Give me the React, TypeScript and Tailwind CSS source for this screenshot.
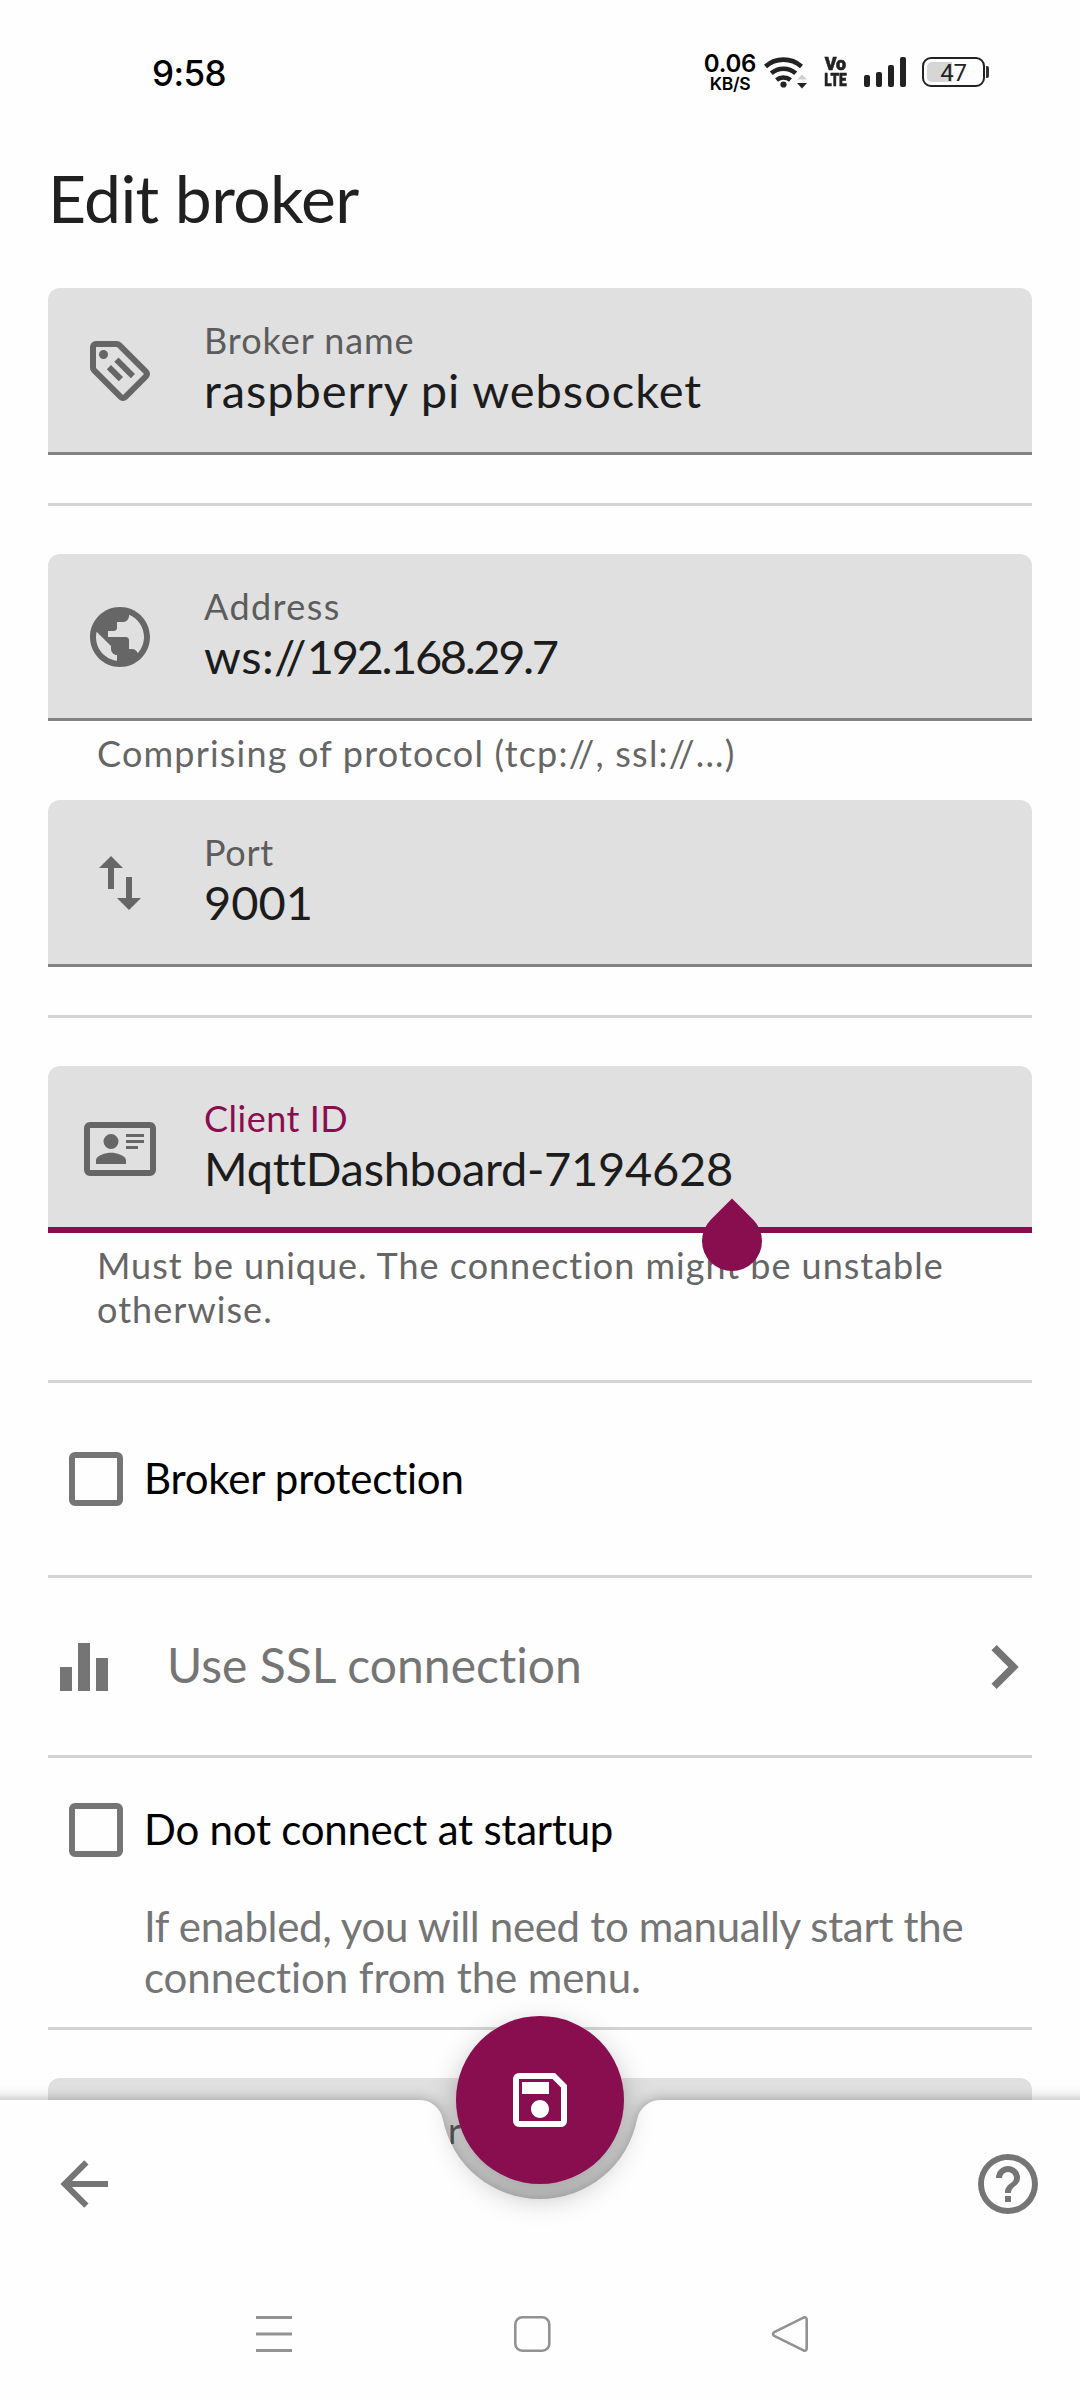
import type { ReactNode } from "react";

function Icon({ d, className }: { d: string; className: string }) {
  return (
    <svg viewBox="0 0 24 24" className={className} fill="currentColor">
      <path d={d} />
    </svg>
  );
}

const ICONS = {
  tag: "M21.41 11.58L12.41 2.58A2 2 0 0 0 11 2H4A2 2 0 0 0 2 4V11A2 2 0 0 0 2.59 12.42L11.59 21.42A2 2 0 0 0 13 22A2 2 0 0 0 14.41 21.41L21.41 14.41A2 2 0 0 0 22 13A2 2 0 0 0 21.41 11.58M13 20L4 11V4H11L20 13M6.5 5A1.5 1.5 0 1 1 5 6.5A1.5 1.5 0 0 1 6.5 5M10.1 8.9L11.5 7.5L17 13L15.6 14.4L10.1 8.9M7.6 11.4L9 10L13 14L11.6 15.4L7.6 11.4Z",
  globe:
    "M12 2C6.48 2 2 6.48 2 12s4.48 10 10 10 10-4.48 10-10S17.52 2 12 2zm-1 17.93c-3.95-.49-7-3.85-7-7.93 0-.62.08-1.21.21-1.79L9 15v1c0 1.1.9 2 2 2v1.93zm6.9-2.54c-.26-.81-1-1.39-1.9-1.39h-1v-3c0-.55-.45-1-1-1H8v-2h2c.55 0 1-.45 1-1V7h2c1.1 0 2-.9 2-2v-.41c2.93 1.19 5 4.06 5 7.41 0 2.08-.8 3.97-2.1 5.39z",
  swap: "M16 17.01V10h-2v7.01h-3L15 21l4-3.99h-3zM9 3L5 6.99h3V14h2V6.99h3L9 3z",
  card: "M22,3H2C0.91,3.04 0.04,3.91 0,5V19C0.04,20.09 0.91,20.96 2,21H22C23.09,20.96 23.96,20.09 24,19V5C23.96,3.91 23.09,3.04 22,3M22,19H2V5H22V19M14,17V15.75C14,14.09 10.66,13.25 9,13.25C7.34,13.25 4,14.09 4,15.75V17H14M9,7A2.5,2.5 0 0,0 6.5,9.5A2.5,2.5 0 0,0 9,12A2.5,2.5 0 0,0 11.5,9.5A2.5,2.5 0 0,0 9,7M14,7V8H20V7H14M14,9V10H20V9H14M14,11V12H18V11H14",
  chevron: "M8.59,16.58L13.17,12L8.59,7.41L10,6L16,12L10,18L8.59,16.58Z",
  save: "M17 3H5a2 2 0 0 0-2 2v14a2 2 0 0 0 2 2h14c1.1 0 2-.9 2-2V7l-4-4zm2 16H5V5h11.17L19 7.83V19zm-7-7c-1.66 0-3 1.34-3 3s1.34 3 3 3 3-1.34 3-3-1.34-3-3-3zM6 6h9v4H6z",
  back: "M20,11V13H8L13.5,18.5L12.08,19.92L4.16,12L12.08,4.08L13.5,5.5L8,11H20Z",
  help: "M11,18H13V16H11V18M12,2A10,10 0 0,0 2,12A10,10 0 0,0 12,22A10,10 0 0,0 22,12A10,10 0 0,0 12,2M12,20C7.59,20 4,16.41 4,12C4,7.59 7.59,4 12,4C16.41,4 20,7.59 20,12C20,16.41 16.41,20 12,20M12,6A4,4 0 0,0 8,10H10A2,2 0 0,1 12,8A2,2 0 0,1 14,10C14,12 11,11.75 11,15H13C13,12.75 16,12.5 16,10A4,4 0 0,0 12,6Z",
};

function StatusBar() {
  return (
    <header className="flex h-[112px] items-start pl-[152px] pr-[91px] font-['Inter'] text-black">
      <div className="mt-[53px] text-[35px] leading-[40px] font-medium tracking-[-0.6px]">9:58</div>
      <div className="ml-auto flex items-start">
        <div className="mt-[51px] flex w-[54px] flex-col items-center font-semibold">
          <span className="text-[24px] leading-[25px] tracking-[-0.2px]">0.06</span>
          <span className="text-[17.5px] leading-[15px] tracking-[-0.4px]">KB/S</span>
        </div>
        <svg viewBox="0 0 46 36" className="mt-[54px] ml-[6px] h-[36px] w-[46px]" fill="none" stroke="#222" strokeWidth="4.6">
          <path d="M2.5 12.5a27 27 0 0 1 36 0" />
          <path d="M8.3 19.3a18.6 18.6 0 0 1 24.4 0" />
          <path d="M13.5 26a11 11 0 0 1 14 0" />
          <circle cx="20.5" cy="30.5" r="3.1" fill="#222" stroke="none" />
          <path d="M34 25.5l5-5 5 5z" fill="#d0d0d0" stroke="none" />
          <path d="M34 29l5 5.5 5-5.5z" fill="#222" stroke="none" />
        </svg>
        <div className="mt-[56px] ml-[15px] flex w-[22px] flex-col items-center font-['Roboto'] font-black text-[#222]">
          <span className="scale-x-[0.94] text-[19px] leading-[16px] [-webkit-text-stroke:0.6px_#222]">Vo</span>
          <span className="scale-x-[0.72] text-[19px] leading-[16px] [-webkit-text-stroke:0.6px_#222]">LTE</span>
        </div>
        <div className="mt-[57px] ml-[18px] flex h-[30px] items-end gap-[6px]">
          <i className="h-[12px] w-[6px] rounded-[2px] bg-[#222]" />
          <i className="h-[15px] w-[6px] rounded-[2px] bg-[#222]" />
          <i className="h-[22px] w-[6px] rounded-[2px] bg-[#222]" />
          <i className="h-[30px] w-[6px] rounded-[2px] bg-[#222]" />
        </div>
        <div className="mt-[57px] ml-[16px] flex items-center">
          <div className="relative h-[30px] w-[63px] rounded-[9px] border-2 border-[#222]">
            <div className="absolute top-[3px] left-[3px] h-[20px] w-[25px] rounded-l-[5px] bg-[#d6d6d6]" />
            <div className="relative pt-px text-center font-['Roboto'] text-[24px] leading-[26px] tracking-[-0.3px] text-[#222]">47</div>
          </div>
          <div className="ml-[1px] h-[12px] w-[3px] rounded-r-[2px] bg-[#333]" />
        </div>
      </div>
    </header>
  );
}

function Field({
  icon,
  label,
  value,
  labelClass,
  valueClass,
  active,
}: {
  icon: string;
  label: string;
  value: ReactNode;
  labelClass: string;
  valueClass: string;
  active?: boolean;
}) {
  return (
    <div
      className={
        active
          ? "relative flex h-[167px] rounded-t-[12px] border-b-[6px] border-[#880e4f] bg-[#e0e0e0]"
          : "relative flex h-[167px] rounded-t-[12px] border-b-[3px] border-[#828282] bg-[#e0e0e0]"
      }
    >
      <Icon d={icon} className="mt-[47px] ml-[36px] size-[72px] shrink-0 text-[#666]" />
      <div className="ml-[48px] pt-[30px]">
        <div className={`text-[36px] leading-[44px] ${active ? "text-[#880e4f]" : "text-[#5c5c5c]"} ${labelClass}`}>{label}</div>
        <div className={`text-[47px] leading-[56px] whitespace-nowrap text-[#1c1c1c] ${valueClass}`}>{value}</div>
      </div>
      {active && (
        <div className="absolute top-[145px] left-[654px] z-10 size-[60px] rotate-45 rounded-full rounded-tl-none bg-[#880e4f]" />
      )}
    </div>
  );
}

function Divider({ className }: { className: string }) {
  return <div className={`h-[3px] bg-[#d3d3d3] ${className}`} />;
}

function CheckRow({ children, className }: { children: ReactNode; className: string }) {
  return (
    <div className={`flex h-[54px] items-start pl-[21px] ${className}`}>
      <div className="size-[54px] shrink-0 rounded-[6px] border-[6px] border-[#757575]" />
      <div className="-mt-px ml-[21px] text-[42px] leading-[54px] whitespace-nowrap text-black">{children}</div>
    </div>
  );
}

function BottomBar() {
  return (
    <div className="absolute inset-x-0 bottom-0 h-[300px]">
      <svg
        viewBox="0 0 1080 300"
        className="absolute inset-0 h-[300px] w-full overflow-visible drop-shadow-[0_0_7px_rgba(0,0,0,0.33)]"
        fill="#fefefe"
      >
        <path d="M-40 0H419.4A24 24 0 0 1 442.9 19.3A99 99 0 0 0 637.1 19.3A24 24 0 0 1 660.6 0H1120V340H-40Z" />
      </svg>
      <button className="absolute top-[-84px] left-[456px] flex size-[168px] items-center justify-center rounded-full bg-[#880e4f] shadow-[0_12px_30px_rgba(0,0,0,0.28)]">
        <Icon d={ICONS.save} className="size-[72px] text-white" />
      </button>
      <div className="relative flex h-[168px] items-center justify-between pr-[36px] pl-[48px] text-[#757575]">
        <Icon d={ICONS.back} className="size-[72px]" />
        <Icon d={ICONS.help} className="size-[72px]" />
      </div>
      <nav className="relative mt-[46px] flex justify-between pr-[271px] pl-[255px] text-[#929292]">
        <svg viewBox="0 0 38 40" className="h-[40px] w-[38px]" stroke="currentColor" strokeWidth="3" fill="none">
          <path d="M1 3.5h36M1 20h36M1 36.5h36" />
        </svg>
        <svg viewBox="0 0 38 40" className="h-[40px] w-[38px]" stroke="currentColor" strokeWidth="2.6" fill="none">
          <rect x="2.3" y="3.3" width="34" height="33.4" rx="7" />
        </svg>
        <svg viewBox="0 0 38 40" className="h-[40px] w-[38px]" stroke="currentColor" strokeWidth="2.6" fill="none" strokeLinejoin="round">
          <path d="M3.2 18.2L32.5 3.6Q35.6 2.8 35.7 5.6V34.4Q35.6 37.2 32.5 36.4L3.2 21.8Q0.8 20 3.2 18.2Z" />
        </svg>
      </nav>
    </div>
  );
}

export default function App() {
  return (
    <div className="relative h-[2400px] w-[1080px] overflow-hidden bg-[#fefefe] font-['Lato',sans-serif] [font-variant-ligatures:none]">
      <StatusBar />
      <main className="px-[48px]">
        <h1 className="mt-[46px] mb-[50px] text-[66px] leading-[80px] tracking-[-0.65px] text-[#202020]">Edit broker</h1>
        <Field icon={ICONS.tag} label="Broker name" value="raspberry pi websocket" labelClass="tracking-[0.95px]" valueClass="tracking-[0.95px]" />
        <Divider className="mt-[48px] mb-[48px]" />
        <Field
          icon={ICONS.globe}
          label="Address"
          value={
            <>
              <span className="tracking-[0.4px]">ws://</span>192.168.29.7
            </>
          }
          labelClass="tracking-[1.4px]"
          valueClass="tracking-[-2.4px]"
        />
        <p className="mt-[10px] mb-[25px] pl-[49px] text-[36px] leading-[44px] tracking-[1.2px] text-[#666]">
          Comprising of protocol (tcp://, ssl://...)
        </p>
        <Field icon={ICONS.swap} label="Port" value="9001" labelClass="tracking-[0.7px]" valueClass="tracking-[0px]" />
        <Divider className="mt-[48px] mb-[48px]" />
        <Field icon={ICONS.card} label="Client ID" value="MqttDashboard-7194628" labelClass="tracking-[0.5px]" valueClass="tracking-[-0.3px]" active />
        <p className="mt-[10px] pl-[49px] text-[36px] leading-[44px] text-[#666]">
          <span className="block tracking-[0.98px]">Must be unique. The connection might be unstable</span>
          <span className="block tracking-[1.05px]">otherwise.</span>
        </p>
        <Divider className="mt-[49px]" />
        <CheckRow className="mt-[69px] mb-[69px]">
          <span className="tracking-[-0.22px]">Broker protection</span>
        </CheckRow>
        <Divider className="" />
        <div className="flex h-[177px] items-center pr-px pl-[12px] text-[#757575]">
          <svg viewBox="0 0 48 48" className="mt-[1px] size-[48px]" fill="currentColor">
            <path d="M0 24h12v24H0zM18 0h12v48H18zM36 15h12v33H36z" />
          </svg>
          <span className="-mt-[3px] ml-[59px] text-[48px] leading-[60px] tracking-[0.02px]">Use SSL connection</span>
          <Icon d={ICONS.chevron} className="-mr-[17px] ml-auto size-[88px]" />
        </div>
        <Divider className="" />
        <CheckRow className="mt-[45px]">
          <span className="tracking-[-0.24px]">Do not connect at startup</span>
        </CheckRow>
        <p className="mt-[44px] pl-[96px] text-[42px] leading-[51px] text-[#757575]">
          <span className="block tracking-[-0.32px]">If enabled, you will need to manually start the</span>
          <span className="block tracking-[-0.08px]">connection from the menu.</span>
        </p>
        <Divider className="mt-[24px] mb-[48px]" />
        <div className="h-[167px] rounded-t-[12px] bg-[#e0e0e0] pt-[30px] pl-[400px] text-[36px] leading-[44px] text-[#5c5c5c]">r</div>
      </main>
      <BottomBar />
    </div>
  );
}
